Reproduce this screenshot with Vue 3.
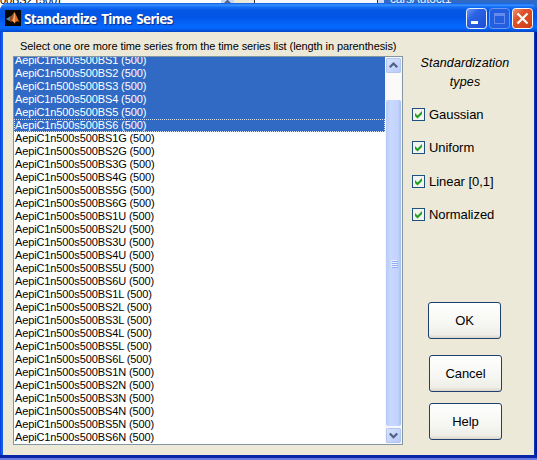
<script setup>
const groups = ['', 'G', 'U', 'L', 'N']
const rows = groups.flatMap((g) =>
  [1, 2, 3, 4, 5, 6].map((n) => ({
    name: `AepiC1n500s500BS${n}${g} (500)`,
    selected: g === '',
    focused: g === '' && n === 6,
  })),
)
const types = ['Gaussian', 'Uniform', 'Linear [0,1]', 'Normalized']
</script>

<template>
  <div class="screen">
    <div class="behind">
      <div class="behind-left"><span class="behind-name">00BS2 (500)</span></div>
      <div class="behind-scroll">
        <svg width="13" height="5" viewBox="0 0 13 5"><path d="M3 4.5 6.5 1 10 4.5" fill="none" stroke="#4d6185" stroke-width="2" /></svg>
      </div>
      <div class="behind-gap"></div>
      <div class="behind-mid"></div>
      <div class="behind-right"><span class="behind-car">carsAutoct1</span></div>
    </div>
    <div class="window">
      <header class="titlebar">
        <svg class="logo" width="16" height="16" viewBox="0 0 16 16">
          <rect width="16" height="16" fill="#080808" />
          <path d="M1 9 5 6.6 7.2 8.8 4.5 11Z" fill="#4f93b5" />
          <path d="M5 6.6C7 6 8 3 9.3 2L8.6 8 5.8 11.8 4.5 11Z" fill="#8b4a2c" />
          <path d="M9.3 2C11 4 12.5 9 15 12.5 13 10.5 11.3 11 9.5 13.6 8.8 11.5 7.5 10.5 5.8 11.8 8 9 8.2 5 9.3 2Z" fill="#e46a22" />
          <path d="M9.3 2C10 4 10.3 8 9.5 13.6 8.8 11.5 8 10.8 7.3 11 9 8 9 5 9.3 2Z" fill="#f3b071" />
        </svg>
        <h1 class="title"><span>Standardize Time Series</span></h1>
        <div class="controls">
          <svg class="ctl" width="21" height="21" viewBox="0 0 21 21">
            <defs>
              <linearGradient id="blue" x1="0" y1="0" x2="1" y2="1"><stop offset="0" stop-color="#6e9bfa" /><stop offset=".35" stop-color="#2b62e2" /><stop offset="1" stop-color="#1c4fd4" /></linearGradient>
            </defs>
            <rect x=".5" y=".5" width="20" height="20" rx="3" fill="url(#blue)" stroke="#e9f0ff" />
            <rect x="5" y="13" width="7" height="3" fill="#fff" />
          </svg>
          <svg class="ctl" width="21" height="21" viewBox="0 0 21 21">
            <rect x=".5" y=".5" width="20" height="20" rx="3" fill="#235de0" stroke="#6d96ee" />
            <path d="M5.5 5.5h10v10h-10z" fill="none" stroke="#638ced" />
            <path d="M5 5h11v3H5z" fill="#638ced" />
          </svg>
          <svg class="ctl" width="21" height="21" viewBox="0 0 21 21">
            <defs>
              <linearGradient id="red" x1="0" y1="0" x2="1" y2="1"><stop offset="0" stop-color="#f09a7c" /><stop offset=".35" stop-color="#e0532c" /><stop offset="1" stop-color="#cc3c12" /></linearGradient>
            </defs>
            <rect x=".5" y=".5" width="20" height="20" rx="3" fill="url(#red)" stroke="#fff" />
            <path d="M5.5 5.5 15.5 15.5M15.5 5.5 5.5 15.5" stroke="#fff" stroke-width="2.2" />
          </svg>
        </div>
      </header>

      <main class="client">
        <section class="series">
          <p class="prompt"><span>Select one ore more time series from the time series list (length in parenthesis)</span></p>
          <div class="listbox">
            <ul class="rows">
              <li v-for="r in rows" :key="r.name" class="row" :class="{ selected: r.selected, focused: r.focused }">{{ r.name }}</li>
            </ul>
            <div class="scrollbar">
              <div class="arrow">
                <svg width="15" height="15" viewBox="0 0 15 15"><path d="M3.8 9.2 7.5 5.5 11.2 9.2" fill="none" stroke="#4d6185" stroke-width="2.2" /></svg>
              </div>
              <div class="track"></div>
              <div class="thumb"><i></i><i></i><i></i><i></i></div>
              <div class="arrow">
                <svg width="15" height="15" viewBox="0 0 15 15"><path d="M3.8 5.5 7.5 9.2 11.2 5.5" fill="none" stroke="#4d6185" stroke-width="2.2" /></svg>
              </div>
            </div>
          </div>
        </section>

        <aside class="side">
          <h2 class="heading">Standardization<br />types</h2>
          <div class="checks">
            <label v-for="t in types" :key="t" class="check">
              <svg width="13" height="13" viewBox="0 0 13 13">
                <rect x=".5" y=".5" width="12" height="12" fill="#f4f4ee" stroke="#1c5180" />
                <path d="M3 5v3l2.5 2.5L10 6V3L5.5 7.5Z" fill="#21a121" />
              </svg>
              <span>{{ t }}</span>
            </label>
          </div>
          <div class="buttons">
            <button class="btn ok">OK</button>
            <button class="btn cancel">Cancel</button>
            <button class="btn help">Help</button>
          </div>
        </aside>
      </main>
    </div>
  </div>
</template>

<style>
body {
  margin: 0;
  overflow: hidden;
}
</style>

<style scoped>
.screen {
  position: relative;
  width: 537px;
  height: 460px;
  overflow: hidden;
  background: #6c79dc;
  font-family: "Liberation Sans", Arial, sans-serif;
  color: #000;
}
.behind {
  display: flex;
  height: 12px;
  overflow: hidden;
  font-size: 11px;
  line-height: 12px;
}
.behind-left { width: 221px; background: #fff; }
.behind-name { display: block; margin-top: -6px; letter-spacing: -0.1px; }
.behind-scroll { width: 13px; background: #c5d4fb; }
.behind-scroll svg { display: block; }
.behind-gap { width: 20px; background: #ece9d8; border-right: 1px solid #333; }
.behind-mid { width: 122px; background: #f6f7fa; border-right: 1px solid #333; }
.behind-right { flex: 1; background: #316ac5; border-left: 6px solid #c9d5ee; color: #e7f0ff; }
.behind-car { display: block; margin: -7px 0 0 6px; font-size: 12px; letter-spacing: -0.2px; }
.window {
  position: absolute;
  inset: 3px 0 2px;
  display: flex;
  flex-direction: column;
  box-sizing: border-box;
  padding: 0 3px 3px;
  border-radius: 8px 8px 0 0;
  background: linear-gradient(90deg, #0831d9 0, #166aee 2px, #0855dd 3px, #0855dd 534px, #001ea0 535px, #00138c 537px);
  box-shadow: inset 0 -3px 0 #0a24a8;
}
.titlebar {
  display: flex;
  align-items: center;
  box-sizing: border-box;
  height: 29px;
  margin: 0 -3px;
  padding: 1px 5px 0;
  border-radius: 8px 8px 0 0;
  background: linear-gradient(180deg, #0a5be0 0, #3a91ff 2px, #1470f5 4px, #0558e6 7px, #0355e5 14px, #0566fb 22px, #0567fc 25px, #0450d8 28px, #0343c0 29px);
}
.logo { flex: none; }
.title {
  flex: 1;
  margin: 2px 0 0 3px;
  font: bold 13.5px "Noto Sans", "Open Sans", sans-serif;
  line-height: 20px;
  letter-spacing: -0.68px;
  word-spacing: 2px;
  color: #fff;
  text-shadow: 1px 1px 1px #0b2a86;
  white-space: nowrap;
}
.controls { display: flex; gap: 2px; margin-right: -1px; }
.ctl { display: block; }
.client {
  display: flex;
  flex: 1;
  background: #ece9d8;
}
.series { width: 400px; }
.prompt {
  height: 24px;
  margin: 0;
  padding-left: 17px;
  font-size: 11px;
  line-height: 28px;
  letter-spacing: -0.085px;
  white-space: nowrap;
}
.listbox {
  display: flex;
  box-sizing: border-box;
  width: 390px;
  height: 389px;
  margin-left: 10px;
  border: 1px solid #8296a4;
  background: #fff;
}
.rows {
  display: flex;
  flex: 1;
  flex-direction: column;
  justify-content: flex-end;
  margin: 0;
  padding: 0;
  overflow: hidden;
  list-style: none;
}
.row {
  flex: none;
  box-sizing: border-box;
  height: 13px;
  padding-left: 1px;
  font-size: 11px;
  line-height: 12px;
  letter-spacing: -0.12px;
  white-space: nowrap;
}
.selected { background: #316ac5; color: #fff; }
.focused { outline: 1px dotted #d4e2ef; outline-offset: -1px; }
.scrollbar {
  display: flex;
  flex-direction: column;
  box-sizing: border-box;
  width: 17px;
  padding: 1px;
  background: #f7f7fb;
}
.arrow {
  flex: none;
  height: 15px;
  border-radius: 2px;
  background: linear-gradient(135deg, #dbe5ff, #b6c8f7);
  box-shadow: 0 0 0 1px #b4c6ee inset;
}
.arrow svg { display: block; }
.track { height: 27px; background: #fbfaf8; }
.thumb {
  display: flex;
  flex: 1;
  flex-direction: column;
  align-items: center;
  justify-content: center;
  gap: 1px;
  margin-bottom: 2px;
  border-radius: 2px;
  background: linear-gradient(90deg, #b8cbf8, #c9d8ff 30%, #c3d3fd 80%, #a9bfee);
}
.thumb i {
  width: 6px;
  height: 1px;
  background: #eef4fe;
  box-shadow: 1px 1px 0 #8cb0f8;
}
.side { width: 131px; }
.heading {
  margin: 0;
  padding: 22px 7px 0 0;
  font-size: 12.5px;
  font-style: italic;
  font-weight: normal;
  line-height: 19px;
  letter-spacing: 0.13px;
  text-align: center;
}
.checks {
  display: grid;
  grid-auto-rows: 33.3px;
  margin: 6px 0 0 9px;
}
.check {
  display: flex;
  align-items: center;
  gap: 4px;
  font-size: 13px;
  letter-spacing: -0.05px;
}
.check svg { flex: none; }
.buttons {
  display: flex;
  flex-direction: column;
  align-items: flex-start;
  margin: 71px 0 0 25px;
}
.btn {
  box-sizing: border-box;
  width: 73px;
  height: 37px;
  padding: 0;
  border: 1px solid #1d4070;
  border-radius: 3px;
  background: linear-gradient(180deg, #fff, #f5f5f1 65%, #eeede6 90%, #d9d5ca);
  font: 13px "Liberation Sans", Arial, sans-serif;
  letter-spacing: -0.1px;
  color: #000;
}
.cancel { margin: 16px 0 11px 1px; }
.help { margin-left: 1px; }
</style>
